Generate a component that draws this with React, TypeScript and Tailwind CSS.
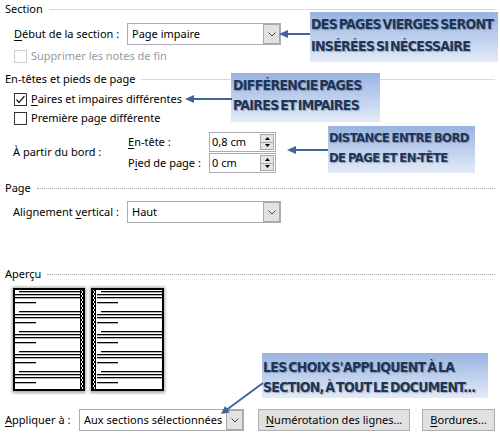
import React from "react";

function U({ children }: { children: React.ReactNode }) {
  return <span className="underline underline-offset-[2px] decoration-[1px]">{children}</span>;
}

function Chevron() {
  return (
    <svg width="8" height="5" viewBox="0 0 8 5">
      <polyline points="0.5,0.5 4,4 7.5,0.5" fill="none" stroke="#444" strokeWidth="1" />
    </svg>
  );
}

function Header({ label, dotted }: { label: string; dotted?: boolean }) {
  return (
    <div className="flex items-center h-[18px] pl-[5px] pr-[5px]">
      <span>{label}</span>
      {dotted ? (
        <div className="flex-1 ml-[6px] border-t border-dotted border-[#a8a8a8]" />
      ) : (
        <div className="flex-1 ml-[6px] border-t border-[#dadada]" />
      )}
    </div>
  );
}

function Select({ text, wide }: { text: string; wide?: boolean }) {
  return (
    <div
      className={
        wide
          ? "flex h-[22px] w-[165px] border border-[#abadb3] bg-white"
          : "flex h-[22px] w-[154px] border border-[#abadb3] bg-white"
      }
    >
      <div className="flex-1 pl-[4px] flex items-center whitespace-nowrap overflow-hidden">{text}</div>
      <div className="w-[17px] bg-[#e2e2e2] border border-[#a9a9a9] flex items-center justify-center">
        <Chevron />
      </div>
    </div>
  );
}

function Check({ checked, disabled }: { checked?: boolean; disabled?: boolean }) {
  return (
    <div
      className={
        disabled
          ? "w-[13px] h-[13px] border border-[#cccccc] bg-white"
          : "w-[13px] h-[13px] border border-[#333333] bg-white flex items-center justify-center"
      }
    >
      {checked && (
        <svg width="11" height="11" viewBox="0 0 11 11">
          <polyline points="1.5,5.5 4,8.5 9.5,2" fill="none" stroke="#222" strokeWidth="1.2" />
        </svg>
      )}
    </div>
  );
}

function Spin({ value }: { value: string }) {
  return (
    <div className="flex h-[20px] w-[67px] border border-[#abadb3] bg-white">
      <div className="flex-1 pl-[2px] flex items-center">{value}</div>
      <div className="w-[14px] my-[1px] mr-[1px] flex flex-col border border-[#a9a9a9] bg-[#e4e4e4]">
        <div className="flex-1 flex items-center justify-center border-b border-[#a9a9a9]">
          <svg width="5" height="3" viewBox="0 0 5 3">
            <polygon points="0,3 5,3 2.5,0" fill="#000" />
          </svg>
        </div>
        <div className="flex-1 flex items-center justify-center">
          <svg width="5" height="3" viewBox="0 0 5 3">
            <polygon points="0,0 5,0 2.5,3" fill="#000" />
          </svg>
        </div>
      </div>
    </div>
  );
}

function Button({ children, w }: { children: React.ReactNode; w: string }) {
  return (
    <div className={w + " h-[22px] border border-[#adadad] bg-[#e1e1e1] flex items-center justify-center whitespace-nowrap"}>
      {children}
    </div>
  );
}

function Preview() {
  const blocks = [0, 1, 2, 3, 4];
  const leftPage = (x: number) => (
    <g>
      <rect x={x} y={4} width={70} height={101} fill="#fff" stroke="#000" strokeWidth={2} />
      {blocks.map((k) => (
        <g key={k}>
          <rect x={x + 5} y={5 + 20 * k + 1} width={61} height={1.3} fill="#000" />
          <rect x={x + 1} y={5 + 20 * k + 4} width={65} height={1.3} fill="#000" />
          <rect x={x + 1} y={5 + 20 * k + 7} width={65} height={1.3} fill="#000" />
          <rect x={x + 1} y={5 + 20 * k + 12} width={21} height={1.3} fill="#000" />
        </g>
      ))}
      <rect x={x + 66} y={5} width={3} height={99} fill="url(#chk)" />
    </g>
  );
  const rightPage = (x: number) => (
    <g>
      <rect x={x} y={4} width={71} height={101} fill="#fff" stroke="#000" strokeWidth={2} />
      <rect x={x + 1} y={5} width={3} height={99} fill="url(#chk)" />
      {blocks.map((k) => (
        <g key={k}>
          <rect x={x + 9} y={5 + 20 * k + 1} width={61} height={1.3} fill="#000" />
          <rect x={x + 5} y={5 + 20 * k + 4} width={65} height={1.3} fill="#000" />
          <rect x={x + 5} y={5 + 20 * k + 7} width={65} height={1.3} fill="#000" />
          <rect x={x + 5} y={5 + 20 * k + 12} width={21} height={1.3} fill="#000" />
        </g>
      ))}
    </g>
  );
  return (
    <svg width="160" height="110" viewBox="0 0 160 110" className="block">
      <defs>
        <pattern id="chk" width="3" height="4" patternUnits="userSpaceOnUse">
          <rect x="0" y="0" width="3" height="4" fill="#fff" />
          <rect x="0" y="0" width="2" height="2" fill="#000" />
          <rect x="1" y="2" width="2" height="2" fill="#000" />
        </pattern>
        <filter id="sh" x="-10%" y="-10%" width="120%" height="120%">
          <feGaussianBlur stdDeviation="1.5" />
        </filter>
      </defs>
      <rect x={2} y={2} width={74} height={106} fill="#a8a8a8" filter="url(#sh)" />
      <rect x={80} y={2} width={75} height={106} fill="#a8a8a8" filter="url(#sh)" />
      {leftPage(4)}
      {rightPage(82)}
    </svg>
  );
}

function Note({ className, lines, tr }: { className: string; lines: string[]; tr: string }) {
  return (
    <div
      className={
        "absolute bg-linear-to-b from-[#98b3e1] to-[#e3ebf7] overflow-hidden whitespace-nowrap font-['Liberation_Sans_Narrow','DejaVu_Sans_Condensed',sans-serif] font-bold leading-[20px] text-[#1d3557] [text-shadow:1px_1px_1px_rgba(40,50,70,0.35)] " +
        tr +
        " " +
        className
      }
    >
      {lines.map((l) => (
        <div key={l}>{l}</div>
      ))}
    </div>
  );
}

export default function App() {
  return (
    <div className="relative w-[500px] h-[433px] bg-white overflow-hidden text-black text-[11px] font-['Noto_Sans','Open_Sans',sans-serif]">
      <div className="flex flex-col">
        <Header label="Section" />
        <div className="flex items-center mt-[5px] pl-[14px]">
          <span className="w-[113px]">
            <U>D</U>ébut de la section :
          </span>
          <Select text="Page impaire" />
        </div>
        <div className="flex items-center h-[14px] mt-[4px] pl-[14px] text-[#9a9a9a]">
          <Check disabled />
          <span className="ml-[4px]">Supprimer les notes de fin</span>
        </div>
        <div className="mt-[7px]">
          <Header label="En-têtes et pieds de page" />
        </div>
        <div className="flex items-center h-[14px] mt-[4px] pl-[14px]">
          <Check checked />
          <span className="ml-[4px]">
            <U>P</U>aires et impaires différentes
          </span>
        </div>
        <div className="flex items-center h-[14px] mt-[5px] pl-[14px]">
          <Check />
          <span className="ml-[4px]">
            Première pa<U>g</U>e différente
          </span>
        </div>
        <div className="flex mt-[7px] pl-[13px]">
          <div className="w-[115px] flex items-center">À partir du bord :</div>
          <div className="flex flex-col gap-[1px]">
            <div className="flex items-center">
              <span className="w-[81px]">
                <U>E</U>n-tête :
              </span>
              <Spin value="0,8 cm" />
            </div>
            <div className="flex items-center">
              <span className="w-[81px]">
                P<U>i</U>ed de page :
              </span>
              <Spin value="0 cm" />
            </div>
          </div>
        </div>
        <div className="mt-[6px]">
          <Header label="Page" dotted />
        </div>
        <div className="flex items-center mt-[4px] pl-[13px]">
          <span className="w-[114px]">
            Alignement <U>v</U>ertical :
          </span>
          <Select text="Haut" />
        </div>
        <div className="mt-[42px]">
          <Header label="Aperçu" dotted />
        </div>
        <div className="ml-[10px] mt-[2px]">
          <Preview />
        </div>
        <div className="flex items-center mt-[14px] pl-[5px]">
          <span className="w-[74px]">
            <U>A</U>ppliquer à :
          </span>
          <Select text="Aux sections sélectionnées" wide />
          <div className="ml-[14px]">
            <Button w="w-[152px]">
              <span>
                <U>N</U>umérotation des lignes...
              </span>
            </Button>
          </div>
          <div className="ml-[12px]">
            <Button w="w-[73px]">
              <span>
                <U>B</U>ordures...
              </span>
            </Button>
          </div>
        </div>
      </div>

      <Note tr="text-[14px] tracking-[-0.7px] [word-spacing:-2px]" className="left-[310px] top-[12px] w-[188px] h-[50px] pl-[1px] pt-[1px] leading-[22px]" lines={["DES PAGES VIERGES SERONT", "INSÉRÉES SI NÉCESSAIRE"]} />
      <Note tr="text-[14px] tracking-[-0.7px] [word-spacing:-2px]" className="left-[231px] top-[73px] w-[149px] h-[49px] pl-[2px] pt-[2px]" lines={["DIFFÉRENCIE PAGES", "PAIRES ET IMPAIRES"]} />
      <Note tr="text-[13px] tracking-[-0.6px] [word-spacing:-1px]" className="left-[328px] top-[126px] w-[147px] h-[47px] pl-[1px] pt-[2px]" lines={["DISTANCE ENTRE BORD", "DE PAGE ET EN-TÊTE"]} />
      <Note tr="text-[14px] tracking-[-0.7px] [word-spacing:-2px]" className="left-[262px] top-[353px] w-[226px] h-[45px] pl-[1px] pt-[4px]" lines={["LES CHOIX S'APPLIQUENT À LA", "SECTION, À TOUT LE DOCUMENT..."]} />

      <svg className="absolute inset-0 pointer-events-none" width="500" height="433" viewBox="0 0 500 433">
        <g stroke="#3f6699" strokeWidth="2" fill="none">
          <line x1="310" y1="34" x2="286" y2="34" />
          <line x1="232" y1="99" x2="192" y2="99" />
          <line x1="328" y1="150" x2="294" y2="150" />
          <line x1="263" y1="383" x2="227" y2="409.5" />
        </g>
        <g fill="#3f6699">
          <polygon points="279,34 288,30 288,38" />
          <polygon points="185,99 194,95 194,103" />
          <polygon points="287,150 296,146 296,154" />
          <polygon points="221,414 229.8,412.4 225.1,406" />
        </g>
      </svg>
    </div>
  );
}
